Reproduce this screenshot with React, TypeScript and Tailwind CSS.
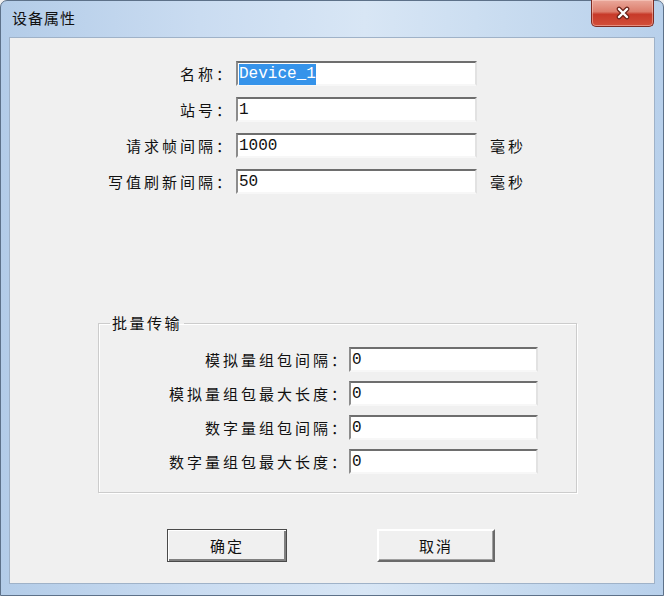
import React from "react";

type Row = { label: string; value: string; unit?: string; selected?: boolean };

const topRows: Row[] = [
  { label: "名称：", value: "Device_1", selected: true },
  { label: "站号：", value: "1" },
  { label: "请求帧间隔：", value: "1000", unit: "毫秒" },
  { label: "写值刷新间隔：", value: "50", unit: "毫秒" },
];

const batchRows: Row[] = [
  { label: "模拟量组包间隔：", value: "0" },
  { label: "模拟量组包最大长度：", value: "0" },
  { label: "数字量组包间隔：", value: "0" },
  { label: "数字量组包最大长度：", value: "0" },
];

const cjk = "font-['Noto_Sans_CJK_SC',sans-serif]";

function Field({ value, selected, className }: { value: string; selected?: boolean; className: string }) {
  return (
    <div
      className={`flex h-[25px] items-center border-2 border-t-[#6e6e6e] border-l-[#8c8c8c] border-r-[#e2e2e2] border-b-[#f7f7f7] bg-white pl-[1px] pt-[1px] font-['Liberation_Mono',monospace] text-[16px] leading-[19px] text-[#111] ${className}`}
    >
      {selected ? <span className="bg-[#3593ea] py-[1px] text-white">{value}</span> : <span>{value}</span>}
    </div>
  );
}

function CloseIcon() {
  return (
    <svg width="16" height="14" viewBox="0 0 16 14">
      <path d="M4 3 L12 11 M12 3 L4 11" stroke="#6b2219" strokeWidth="4.6" strokeLinecap="round" />
      <path d="M4 3 L12 11 M12 3 L4 11" stroke="#ffffff" strokeWidth="2.4" strokeLinecap="round" />
    </svg>
  );
}

export default function App() {
  return (
    <div className="h-[596px] w-[664px] overflow-hidden bg-[#f0f0f0]">
      <div className="flex h-full w-full flex-col rounded-t-[7px] border border-[#5d7189] bg-[linear-gradient(90deg,#b3cce8_0%,#cadcf1_30%,#d8e6f5_55%,#c6daef_80%,#b8d0eb_100%)]">
        {/* title bar */}
        <div className="flex h-[36px] shrink-0 items-start">
          <div className={`pl-[11px] pt-[7px] text-[15px] leading-[20px] tracking-[1px] text-[#111] ${cjk}`}>设备属性</div>
          <div className="ml-auto mr-[9px] -mt-[1px] flex h-[27px] w-[63px] items-center justify-center rounded-b-[5px] border border-t-0 border-[#7d2b22] bg-[linear-gradient(180deg,#eaa89b_0%,#dc7d6c_45%,#c73a29_55%,#d24f3a_100%)] shadow-[inset_0_0_0_1px_rgba(255,220,210,0.45)]">
            <CloseIcon />
          </div>
        </div>

        {/* client area */}
        <div className={`mx-[8px] h-[547px] shrink-0 border border-[#9fb2c8] bg-[#f0f0f0] ${cjk} text-[15px] text-[#111]`}>
          <div className="flex flex-col gap-[11px] pt-[23px]">
            {topRows.map((r) => (
              <div key={r.label} className="flex h-[25px] items-center">
                <span className="w-[224px] text-right leading-[20px] tracking-[3px]">{r.label}</span>
                <Field value={r.value} selected={r.selected} className="ml-[2px] w-[241px]" />
                {r.unit && <span className="ml-[13px] leading-[20px] tracking-[3px]">{r.unit}</span>}
              </div>
            ))}
          </div>

          <fieldset className="ml-[88px] mt-[119px] w-[479px] border border-[#cccccc] pb-[18px] pt-[14px] shadow-[inset_1px_1px_0_#ffffff,1px_1px_0_#ffffff]">
            <legend className="ml-[11px] px-[2px] leading-[20px] tracking-[2.5px]">批量传输</legend>
            <div className="flex flex-col gap-[9px]">
              {batchRows.map((r) => (
                <div key={r.label} className="flex h-[25px] items-center">
                  <span className="w-[250px] text-right leading-[20px] tracking-[3px]">{r.label}</span>
                  <Field value={r.value} className="w-[189px]" />
                </div>
              ))}
            </div>
          </fieldset>

          <div className="ml-[157px] mt-[36px] flex">
            <button className="flex h-[33px] w-[120px] items-center justify-center border border-[#4a4a4a] bg-[#f0f0f0] leading-[20px] tracking-[2px] shadow-[inset_1px_1px_0_#ffffff,inset_-2px_-2px_0_#808080]">
              确定
            </button>
            <button className="ml-[90px] flex h-[33px] w-[118px] items-center justify-center border-2 border-t-[#ffffff] border-l-[#ffffff] border-r-[#6a6a6a] border-b-[#6a6a6a] bg-[#f0f0f0] leading-[20px] tracking-[2px] shadow-[inset_-1px_-1px_0_#a0a0a0]">
              取消
            </button>
          </div>
        </div>
      </div>
    </div>
  );
}
